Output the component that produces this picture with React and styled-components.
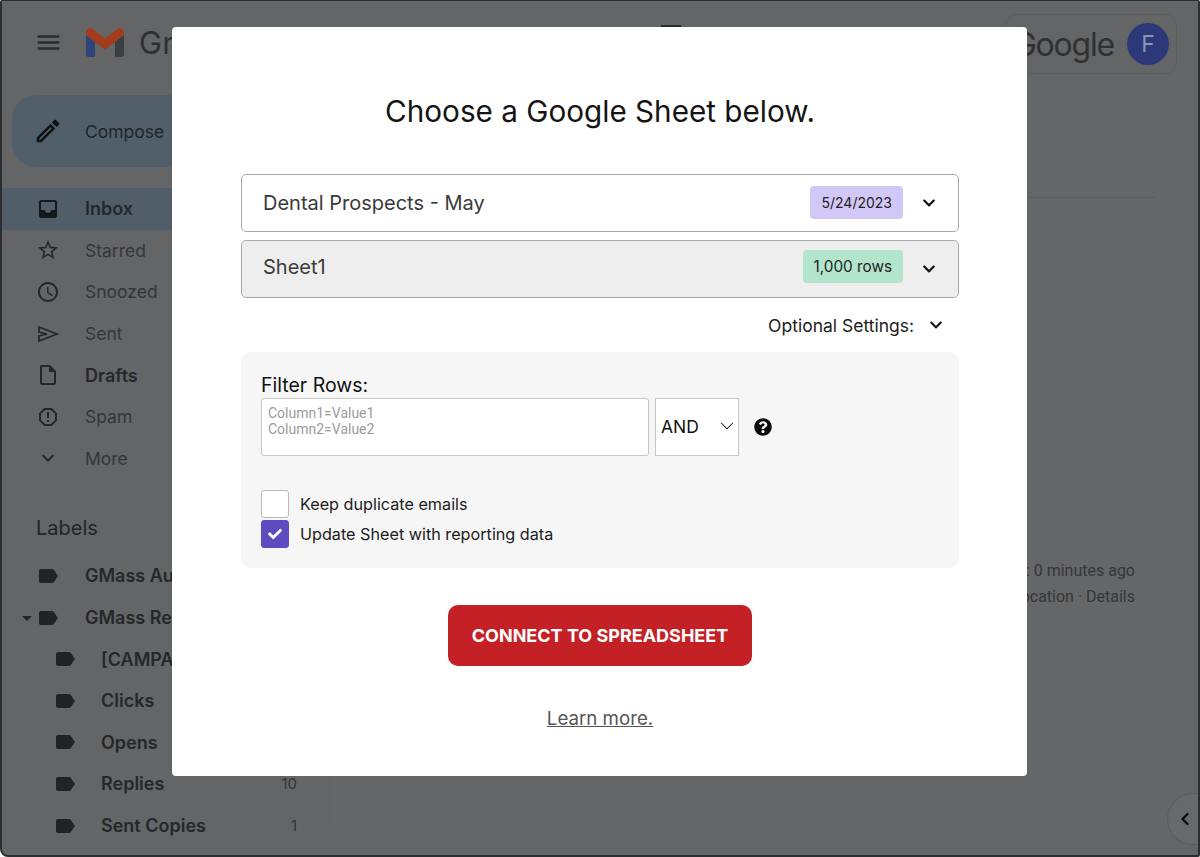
import React from 'react';
import styled, { createGlobalStyle } from 'styled-components';
import { FaChevronDown, FaQuestionCircle, FaCheck } from 'react-icons/fa';
import { ChevronDown, ChevronLeft } from 'lucide-react';

const GlobalStyle = createGlobalStyle`
  html, body {
    margin: 0;
    padding: 0;
    background: #ffffff;
  }
  * {
    box-sizing: border-box;
  }
`;

const Page = styled.div`
  position: relative;
  width: 1200px;
  height: 857px;
  overflow: hidden;
  display: grid;
  grid-template-columns: 330px minmax(0, 1fr);
  grid-template-rows: 82px 1fr;
  background: #646566;
  border: solid #2c2d2e;
  border-width: 1px 2px 2px 2px;
  border-radius: 2px 2px 2px 8px;
  font-family: 'Inter', 'Liberation Sans', sans-serif;
`;

const TopBar = styled.header`
  grid-column: 1 / 3;
  display: flex;
  align-items: center;
  justify-content: space-between;
  padding: 0 21px 0 32px;
`;

const Brand = styled.div`
  display: flex;
  align-items: center;
  gap: 23px;
  color: #2b2c2e;
  svg {
    display: block;
  }
`;

const BrandName = styled.span`
  margin-left: -8px;
  font-family: 'Inter', sans-serif;
  font-size: 31px;
  color: #2f3032;
`;

const HiddenTool = styled.div`
  position: absolute;
  left: 659px;
  top: 24px;
  width: 20px;
  height: 3px;
  background: #2c2d2e;
`;

const AccountBox = styled.div`
  width: 172px;
  height: 60px;
  margin-top: 4px;
  padding: 0 7px 0 0;
  display: flex;
  align-items: center;
  justify-content: flex-end;
  gap: 13px;
  border: 1px solid #5c5d5e;
  border-radius: 12px;
`;

const GoogleWord = styled.span`
  font-family: 'Inter', sans-serif;
  font-size: 32px;
  letter-spacing: -1.2px;
  color: #2f3032;
`;

const Avatar = styled.div`
  width: 42px;
  height: 42px;
  border-radius: 50%;
  background: #2c3877;
  color: #8c93b8;
  font-family: 'Inter', sans-serif;
  font-size: 23px;
  display: flex;
  align-items: center;
  justify-content: center;
`;

const Sidebar = styled.nav`
  padding-top: 12px;
  display: flex;
  flex-direction: column;
  color: #2a2b2d;
`;

const ComposeButton = styled.div`
  width: 260px;
  height: 72px;
  margin-left: 10px;
  margin-bottom: 21px;
  padding-left: 21px;
  display: flex;
  align-items: center;
  gap: 22px;
  border-radius: 24px;
  background: #505f6a;
  font-size: 17.5px;
  color: #1f2429;
`;

const NavRow = styled.div`
  height: 41.6px;
  width: 295px;
  padding-left: ${(p) => (p.$nested ? 51 : 34)}px;
  display: flex;
  align-items: center;
  gap: ${(p) => (p.$nested ? 24 : 25)}px;
  position: relative;
  font-size: ${(p) => (p.$bold ? 18 : 17.5)}px;
  font-weight: ${(p) => (p.$bold ? 600 : 400)};
  color: ${(p) => (p.$bold ? '#25272a' : '#34353a')};
  background: ${(p) => (p.$active ? '#515d68' : 'transparent')};
  border-radius: ${(p) => (p.$active ? '0 20px 20px 0' : '0')};
  svg {
    flex: none;
  }
`;

const NavLabel = styled.span`
  flex: 1;
  white-space: nowrap;
`;

const NavCount = styled.span`
  font-size: 15px;
  font-weight: 400;
  color: #343537;
`;

const LabelsHeading = styled.div`
  margin: 34px 0 12px 34px;
  font-size: 20px;
  line-height: 30px;
  color: #232426;
`;

const Caret = styled.span`
  position: absolute;
  left: 20px;
  top: 19px;
  border: 5px solid transparent;
  border-top: 5px solid #232426;
`;

const Main = styled.main`
  position: relative;
  margin: 0 20px 20px 0;
  padding: 114px 23px 0 30px;
  display: flex;
  flex-direction: column;
  align-items: flex-end;
  background: #656667;
  border-radius: 12px;
  color: #343537;
`;

const Divider = styled.div`
  align-self: stretch;
  border-top: 1px solid #5b5c5d;
`;

const AccountInfo = styled.div`
  margin-top: 360px;
  margin-right: 20px;
  text-align: right;
  font-family: 'Roboto', sans-serif;
  font-size: 16px;
  line-height: 26px;
  color: #353638;
`;

const CollapseTab = styled.div`
  position: absolute;
  right: -20px;
  bottom: -10px;
  width: 31px;
  height: 52px;
  padding-left: 7px;
  border: 1px solid #5b5c5d;
  border-right: 0;
  border-radius: 26px 0 0 26px;
  background: #68696a;
  display: flex;
  align-items: center;
  color: #0c0c0d;
`;

const Backdrop = styled.div`
  position: absolute;
  inset: 0;
  display: flex;
  align-items: flex-start;
  justify-content: center;
  padding-top: 26px;
  padding-right: 1px;
`;

const Modal = styled.div`
  width: 855px;
  height: 749px;
  padding: 66px 68px 0 69px;
  background: #ffffff;
  border-radius: 4px;
  display: flex;
  flex-direction: column;
  font-family: 'Inter', sans-serif;
  color: #111111;
`;

const Title = styled.h1`
  margin: -1px 0 44px;
  height: 38px;
  font-size: 29.7px;
  line-height: 38px;
  font-weight: 400;
  text-align: center;
  color: #141414;
`;

const PickerRow = styled.div`
  height: 58px;
  margin-bottom: 8px;
  padding: 0 22px ${(p) => (p.$muted ? 4 : 0)}px 21px;
  display: flex;
  align-items: center;
  border: 1.5px solid #a9a9a9;
  border-radius: 5px;
  background: ${(p) => (p.$muted ? '#eeeeee' : '#ffffff')};
  svg {
    margin-top: ${(p) => (p.$muted ? 4 : 0)}px;
  }
`;

const PickerName = styled.span`
  flex: 1;
  font-size: 20px;
  color: #3a3a3a;
`;

const Tag = styled.span`
  height: 33px;
  padding: 0 11px;
  margin: -2px 19px 0 0;
  display: flex;
  align-items: center;
  border-radius: 4px;
  font-size: ${(p) => p.$size}px;
  color: #222222;
  background: ${(p) => p.$color};
`;

const OptionalRow = styled.div`
  height: 38px;
  padding-right: 16px;
  display: flex;
  align-items: center;
  justify-content: flex-end;
  gap: 15px;
  font-size: 17.5px;
  color: #1c1c1c;
`;

const FilterPanel = styled.section`
  height: 216px;
  margin-top: 8px;
  padding: 20px 20px 0;
  background: #f6f6f6;
  border-radius: 10px;
  display: flex;
  flex-direction: column;
`;

const FilterLabel = styled.div`
  font-size: 19.5px;
  line-height: 26px;
  color: #111111;
`;

const FilterRow = styled.div`
  display: flex;
  align-items: center;
  gap: 6px;
`;

const RulesInput = styled.textarea`
  width: 388px;
  height: 58px;
  padding: 6px 6px;
  resize: none;
  border: 1.5px solid #c6c6c6;
  border-radius: 3px;
  background: #ffffff;
  font-family: 'Roboto', sans-serif;
  font-size: 14px;
  line-height: 16px;
  &::placeholder {
    color: #9b9b9b;
    opacity: 1;
  }
`;

const OperatorSelect = styled.div`
  width: 84px;
  height: 58px;
  padding: 0 0 2px 5px;
  display: flex;
  align-items: center;
  justify-content: space-between;
  border: 1.5px solid #c6c6c6;
  background: #ffffff;
  font-size: 17.5px;
  color: #111111;
`;

const HelpIcon = styled.span`
  display: flex;
  margin-left: 9px;
  color: #0a0a0a;
`;

const CheckList = styled.div`
  margin-top: 34px;
  display: flex;
  flex-direction: column;
  gap: 2px;
`;

const CheckRow = styled.label`
  display: flex;
  align-items: center;
  gap: 11px;
  font-size: 16.2px;
  color: #1c1c1c;
`;

const CheckBox = styled.span`
  width: 28px;
  height: 28px;
  display: flex;
  align-items: center;
  justify-content: center;
  border-radius: 3px;
  color: #ffffff;
  border: 1px solid ${(p) => (p.$on ? '#5f4bc0' : '#b9b9b9')};
  background: ${(p) => (p.$on ? '#5f4bc0' : '#ffffff')};
`;

const ConnectButton = styled.button`
  align-self: center;
  width: 304px;
  height: 61px;
  margin-top: 37px;
  border: 0;
  border-radius: 10px;
  background: #c42127;
  color: #ffffff;
  font-family: 'Inter', sans-serif;
  font-size: 18px;
  font-weight: 700;
`;

const LearnMore = styled.a`
  align-self: center;
  margin-top: 41px;
  font-size: 18.7px;
  color: #555555;
  text-decoration: underline;
`;

const Icon = ({ d, size = 24, color = 'currentColor' }) => (
  <svg width={size} height={size} viewBox="0 0 24 24" fill={color}>
    {[].concat(d).map((path) => (
      <path key={path} d={path} />
    ))}
  </svg>
);

const SentIcon = ({ color }) => (
  <svg width="24" height="24" viewBox="0 0 24 24" fill="none" stroke={color} strokeWidth="1.8">
    <path d="M3 5 21 12 3 19V14L11 12 3 10Z" strokeLinejoin="miter" />
  </svg>
);

const icons = {
  menu: 'M3 18h18v-2H3v2zm0-5h18v-2H3v2zm0-7v2h18V6H3z',
  pencil:
    'M14.06 9.02l.92.92L5.92 19H5v-.92l9.06-9.06M17.66 3c-.25 0-.51.1-.7.29l-1.83 1.83 3.75 3.75 1.83-1.83c.39-.39.39-1.02 0-1.41l-2.34-2.34c-.2-.2-.45-.29-.71-.29zm-3.6 3.19L3 17.25V21h3.75L17.81 9.94l-3.75-3.75z',
  inbox:
    'M19 3H5c-1.1 0-2 .9-2 2v14c0 1.1.9 2 2 2h14c1.1 0 2-.9 2-2V5c0-1.1-.9-2-2-2zm0 10h-4c0 1.66-1.35 3-3 3s-3-1.34-3-3H5V5h14v8z',
  star: 'M22 9.24l-7.19-.62L12 2 9.19 8.63 2 9.24l5.46 4.73L5.82 21 12 17.27 18.18 21l-1.63-7.03L22 9.24zM12 15.4l-3.76 2.27 1-4.28-3.32-2.88 4.38-.38L12 6.1l1.71 4.04 4.38.38-3.32 2.88 1 4.28L12 15.4z',
  clock:
    'M11.99 2C6.47 2 2 6.48 2 12s4.47 10 9.99 10C17.52 22 22 17.52 22 12S17.52 2 11.99 2zM12 20c-4.42 0-8-3.58-8-8s3.58-8 8-8 8 3.58 8 8-3.58 8-8 8zm.5-13H11v6l5.25 3.15.75-1.23-4.5-2.67z',
  draft:
    'M14 2H6c-1.1 0-2 .9-2 2v16c0 1.1.9 2 2 2h12c1.1 0 2-.9 2-2V8l-6-6zm4 18H6V4h7v5h5v11z',
  spam: [
    'M15.73 3H8.27L3 8.27v7.46L8.27 21h7.46L21 15.73V8.27L15.73 3zM19 14.9L14.9 19H9.1L5 14.9V9.1L9.1 5h5.8L19 9.1v5.8z',
    'M11 7h2v6h-2zM11 15h2v2h-2z',
  ],
  more: 'M16.59 8.59L12 13.17 7.41 8.59 6 10l6 6 6-6z',
  label:
    'M17.63 5.84C17.27 5.33 16.67 5 16 5L5 5.01C3.9 5.01 3 5.9 3 7v10c0 1.1.9 1.99 2 1.99L16 19c.67 0 1.27-.33 1.63-.84L22 12l-4.37-6.16z',
};

const GmailLogo = () => (
  <svg width="38" height="29" viewBox="0 0 38 29">
    <path fill="#2f4378" d="M0 6v20a3 3 0 0 0 3 3h6V12z" />
    <path fill="#3a3f3f" d="M38 6v20a3 3 0 0 1-3 3h-6V12z" />
    <path
      fill="#a23c1c"
      d="M0 4.5C0 .8 4-1 7 1.2L19 10.5 31 1.2C34-1 38 .8 38 4.5V7L29 14 19 21.5 9 14 0 7Z"
    />
  </svg>
);

const mainItems = [
  { icon: 'star', text: 'Starred' },
  { icon: 'clock', text: 'Snoozed' },
  { icon: 'sent', text: 'Sent' },
  { icon: 'draft', text: 'Drafts', bold: true },
  { icon: 'spam', text: 'Spam' },
  { icon: 'more', text: 'More' },
];

const labelItems = [
  { text: 'GMass Auto Followup' },
  { text: 'GMass Reports', caret: true },
  { text: '[CAMPAIGNS]', nested: true },
  { text: 'Clicks', nested: true },
  { text: 'Opens', nested: true },
  { text: 'Replies', nested: true, count: 10 },
  { text: 'Sent Copies', nested: true, count: 1 },
];

function App() {
  return (
    <Page>
      <GlobalStyle />
      <TopBar>
        <Brand>
          <Icon d={icons.menu} size={29} />
          <GmailLogo />
          <BrandName>Gmail</BrandName>
        </Brand>
        <HiddenTool />
        <AccountBox>
          <GoogleWord>Google</GoogleWord>
          <Avatar>F</Avatar>
        </AccountBox>
      </TopBar>

      <Sidebar>
        <ComposeButton>
          <Icon d={icons.pencil} size={30} color="#0f1113" />
          Compose
        </ComposeButton>
        <NavRow $active $bold>
          <Icon d={icons.inbox} size={24} color="#15181c" />
          <NavLabel>Inbox</NavLabel>
        </NavRow>
        {mainItems.map((item) => (
          <NavRow key={item.text} $bold={item.bold}>
            {item.icon === 'sent' ? (
              <SentIcon color="#26272a" />
            ) : (
              <Icon d={icons[item.icon]} size={24} color="#26272a" />
            )}
            <NavLabel>{item.text}</NavLabel>
          </NavRow>
        ))}
        <LabelsHeading>Labels</LabelsHeading>
        {labelItems.map((item) => (
          <NavRow key={item.text} $bold $nested={item.nested}>
            {item.caret && <Caret />}
            <Icon d={icons.label} size={24} color="#222326" />
            <NavLabel>{item.text}</NavLabel>
            {item.count && <NavCount>{item.count}</NavCount>}
          </NavRow>
        ))}
      </Sidebar>

      <Main>
        <Divider />
        <AccountInfo>
          Last account activity: 0 minutes ago
          <br />
          Open in 1 other location · Details
        </AccountInfo>
        <CollapseTab>
          <ChevronLeft size={20} strokeWidth={2.8} />
        </CollapseTab>
      </Main>

      <Backdrop>
        <Modal>
          <Title>Choose a Google Sheet below.</Title>
          <PickerRow>
            <PickerName>Dental Prospects - May</PickerName>
            <Tag $color="#d2c8f7" $size={14}>5/24/2023</Tag>
            <FaChevronDown size={14} />
          </PickerRow>
          <PickerRow $muted>
            <PickerName>Sheet1</PickerName>
            <Tag $color="#b3e5cd" $size={15.3}>1,000 rows</Tag>
            <FaChevronDown size={14} />
          </PickerRow>
          <OptionalRow>
            Optional Settings:
            <FaChevronDown size={14} />
          </OptionalRow>
          <FilterPanel>
            <FilterLabel>Filter Rows:</FilterLabel>
            <FilterRow>
              <RulesInput readOnly placeholder={'Column1=Value1\nColumn2=Value2'} />
              <OperatorSelect>
                AND
                <ChevronDown size={22} strokeWidth={1.1} />
              </OperatorSelect>
              <HelpIcon>
                <FaQuestionCircle size={18} />
              </HelpIcon>
            </FilterRow>
            <CheckList>
              <CheckRow>
                <CheckBox />
                Keep duplicate emails
              </CheckRow>
              <CheckRow>
                <CheckBox $on>
                  <FaCheck size={14} />
                </CheckBox>
                Update Sheet with reporting data
              </CheckRow>
            </CheckList>
          </FilterPanel>
          <ConnectButton>CONNECT TO SPREADSHEET</ConnectButton>
          <LearnMore>Learn more.</LearnMore>
        </Modal>
      </Backdrop>
    </Page>
  );
}

export default App;
